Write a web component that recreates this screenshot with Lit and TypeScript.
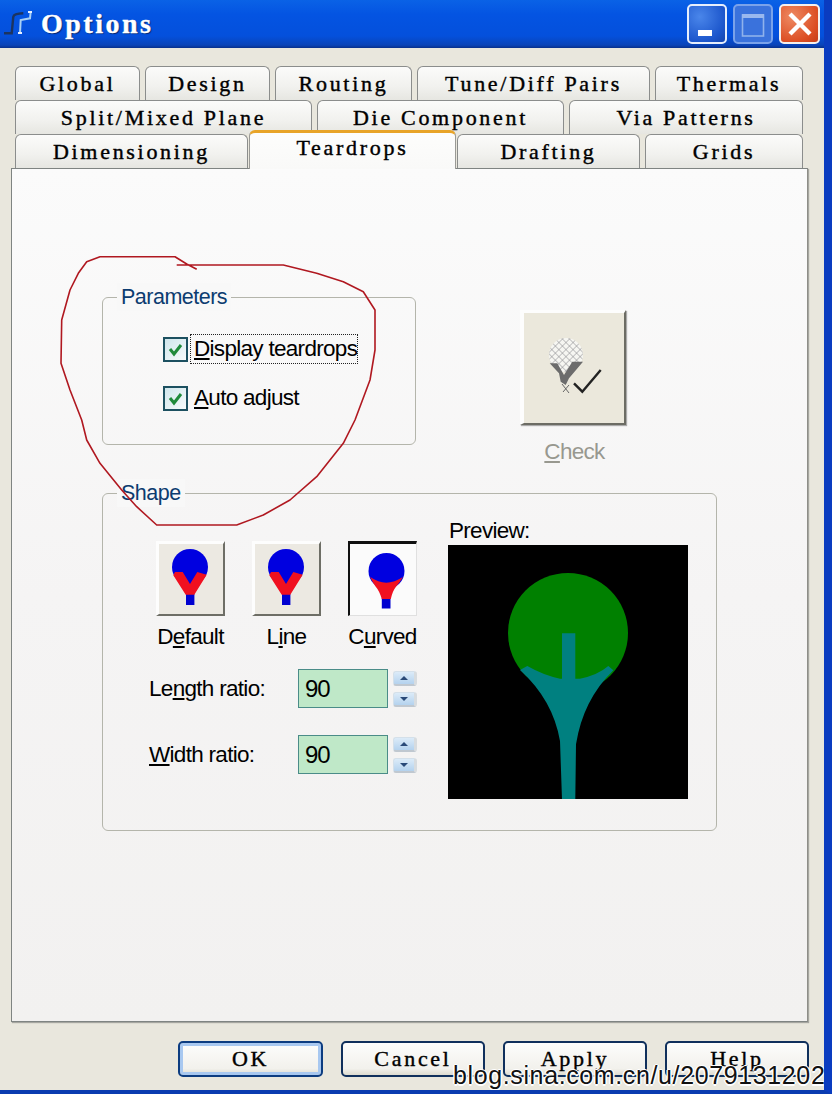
import { LitElement, html, css, svg } from "lit";
import { customElement } from "lit/decorators.js";

const shapeIcon = (kind: string) => {
  if (kind === "curved") {
    return svg`<svg class="glyph" viewBox="0 0 68 75">
      <circle cx="38" cy="30" r="18" fill="#0000e0"/>
      <rect x="33.3" y="57" width="8.7" height="10.5" fill="#0000d0"/>
      <path d="M21.7 36 Q30 41.7 37.7 41.7 Q46 41.7 54.3 36 Q51 42 48 45 Q44 50 42.3 58 H33.3 Q31 50 26.7 45 Q24 41 21.7 36Z" fill="#f01020"/>
    </svg>`;
  }
  return svg`<svg class="glyph" viewBox="0 0 69 75">
    <circle cx="34" cy="26" r="18" fill="#0000e0"/>
    <rect x="30" y="53" width="8.4" height="11" fill="#0000d0"/>
    <path d="M19 31 H26.7 L34 43 L41.3 31 L50.7 33.7 L38.3 53.7 H29.7 L17.3 34.3Z" fill="#f01020"/>
  </svg>`;
};

const circlePoints =
  "196.7,269.3 186.7,264 175,256.7 100,256.7 86.7,261.7 78.3,273.3 70,290 61.7,320 61,363.3 70,390 81.7,420 86.7,440 100,463.3 121.7,490 136.7,506.7 156.7,525 236.7,525 263.3,515 290,500 316.7,476.7 343.3,443.3 355,420 370,380 375,350 375,310 363.3,291.7 343.3,281.7 316.7,273.3 283.3,265 176.7,265";

@customElement("app-root")
export class AppRoot extends LitElement {
  static styles = css`
    :host {
      display: block;
      position: relative;
      width: 832px;
      height: 1094px;
      overflow: hidden;
      box-sizing: border-box;
      background: #e9e7dd;
      border-right: 8px solid #0a3cc0;
      border-bottom: 4px solid #0a3cb0;
      font-family: "Liberation Sans", Arial, sans-serif;
      color: #000;
    }
    .title {
      height: 48px;
      display: flex;
      align-items: center;
      margin-right: -8px;
      padding: 0 12px 0 4px;
      box-sizing: border-box;
      background: linear-gradient(180deg, #0a62e6 0%, #0454e2 30%, #0450dc 75%, #0a44b8 94%, #08308c 100%);
    }
    .title-icon { width: 30px; height: 30px; flex: none; margin-right: 7px; }
    .title-text {
      font: bold 28px "Liberation Serif", serif;
      letter-spacing: 2.5px;
      color: #fff;
      -webkit-text-stroke: 0.4px #fff;
      text-shadow: 1px 1px 1px #06246c;
      flex: 1;
    }
    .win-btns { display: flex; gap: 6px; }
    .win {
      width: 40px;
      height: 40px;
      box-sizing: border-box;
      border-radius: 5px;
      border: 2px solid #e6eefc;
      display: flex;
      align-items: center;
      justify-content: center;
      background: radial-gradient(circle at 30% 30%, #4a86ea, #1c56cc 70%, #1444ac);
    }
    .win svg { width: 36px; height: 36px; display: block; }
    .win.max { border-color: #7aa2ea; background: #3a72dc; }
    .win.close { width: 41px; border-color: #f4f0ee; background: radial-gradient(circle at 30% 30%, #ee8a62, #dc4e24 70%, #c43c18); }

    .tabs { margin: 18px 0 0 15px; width: 788px; }
    .row { display: grid; column-gap: 5px; grid-template-rows: 34px; height: 34px; }
    .r1 { grid-template-columns: 125px 125px 137px 233px 148px; }
    .r2 { grid-template-columns: 297px 247px 234px; }
    .r3 { grid-template-columns: 233px 199px 183px 158px; }
    .tab {
      box-sizing: border-box;
      border: 1px solid #8b8d8c;
      border-bottom: 0;
      border-radius: 6px 6px 0 0;
      background: linear-gradient(180deg, #fbfbfa 0%, #f1f1ee 60%, #e6e6e1 100%);
      font: 22px/30px "Liberation Serif", serif;
      padding-top: 2px;
      letter-spacing: 2.7px;
      text-align: center;
      white-space: pre;
      -webkit-text-stroke: 0.4px #000;
    }
    .tab.sel {
      position: relative;
      z-index: 2;
      margin: -4px -4px -1px;
      border: 1px solid #9a9a96;
      border-top: 3px solid #e8a428;
      border-bottom: 0;
      background: linear-gradient(180deg, #fdfdfc, #f9f9f8);
      padding-top: 0;
      line-height: 30px;
    }
    .panel {
      box-sizing: border-box;
      margin-left: 11px;
      width: 797px;
      height: 854px;
      border: 1px solid #7f8482;
      border-right-color: #8e8e88;
      box-shadow: 1px 1px 1px #a6a6a0;
      background: linear-gradient(180deg, #fbfbfb 0%, #f5f4f4 50%, #f2f1f0 100%);
      padding: 128px 0 0 90px;
    }
    .top { display: flex; align-items: flex-start; height: 148px; }
    .group {
      position: relative;
      box-sizing: border-box;
      border: 1px solid #b4b5ab;
      border-radius: 6px;
    }
    .params { width: 314px; height: 148px; padding: 38px 0 0 60px; flex: none; }
    .legend {
      position: absolute;
      left: 14px;
      top: -15px;
      padding: 0 4px;
      background: #f8f8f8;
      color: #0c3c70;
      font-size: 21.5px;
      line-height: 28px;
      letter-spacing: -0.5px;
    }
    .chk-row { display: flex; align-items: center; height: 26px; margin-bottom: 23px; }
    .box {
      box-sizing: border-box;
      width: 25px;
      height: 25px;
      flex: none;
      border: 2px solid #1c5060;
      background: linear-gradient(135deg, #d0e6ec, #f6fafa);
      margin-right: 6px;
    }
    .box svg { display: block; width: 21px; height: 21px; }
    .lbl { font-size: 22.5px; line-height: 28px; letter-spacing: -0.7px; white-space: nowrap; }
    .focus { outline: 1.5px dotted #222; padding: 0 0 0 3px; margin-left: -3px; }
    .check-col { margin: 13px 0 0 104px; display: flex; flex-direction: column; align-items: center; width: 106px; flex: none; }
    .check-btn {
      box-sizing: border-box;
      width: 106px;
      height: 115px;
      background: #ebe8dc;
      border-top: 3px solid #fdfdfd;
      border-left: 4px solid #fdfdfd;
      border-right: 2px solid #6c6c64;
      border-bottom: 2px solid #6c6c64;
      box-shadow: 1px 1px 1px #aaa;
    }
    .check-btn svg { display: block; margin: -3px 0 0 -4px; width: 106px; height: 115px; }
    .check-lbl { color: #98988f; margin: 13px 0 0 3px; }

    .shape {
      margin-top: 48px;
      width: 615px;
      height: 338px;
      padding: 23px 0 0 45px;
      display: flex;
    }
    .left { width: 300px; padding-top: 24px; box-sizing: border-box; }
    .shapes { display: flex; gap: 27px; margin-left: 8px; }
    .shape-col { display: flex; flex-direction: column; align-items: center; width: 69px; }
    .shape-btn {
      box-sizing: border-box;
      width: 69px;
      height: 75px;
      background: #ece9e2;
      border-top: 3px solid #fdfdfd;
      border-left: 3px solid #fdfdfd;
      border-right: 2px solid #6e6e66;
      border-bottom: 2px solid #6e6e66;
      position: relative;
    }
    .shape-btn.on {
      background: #fbfbfb;
      border-top: 3px solid #101010;
      border-left: 2px solid #101010;
      border-right: 1px solid #e0e0e0;
      border-bottom: 1px solid #e0e0e0;
    }
    .glyph { position: absolute; left: -3px; top: -3px; width: 69px; height: 75px; }
    .shape-btn.on .glyph { left: -2px; top: -3px; }
    .shape-col .lbl { margin-top: 7px; }
    .ratio { display: flex; align-items: center; margin-top: 27px; height: 39px; }
    .ratio.first { margin-top: 18px; }
    .ratio .lbl { width: 149px; margin-left: 1px; flex: none; }
    .input {
      box-sizing: border-box;
      width: 90px;
      height: 39px;
      border: 1px solid #4a8c88;
      background: #bfe8c8;
      font-size: 24px;
      line-height: 37px;
      padding-left: 6px;
      letter-spacing: -1px;
    }
    .spin { display: flex; flex-direction: column; gap: 6px; margin-left: 5px; }
    .spin div {
      box-sizing: border-box;
      width: 24px;
      height: 15px;
      border-radius: 3px;
      background: linear-gradient(180deg, #dcebf8, #b4d2ee);
      border: 1px solid #d4e0ea;
      border-right: 3px solid #d8dcdf;
      border-bottom: 2px solid #c0c8d0;
      display: flex;
      align-items: center;
      justify-content: center;
    }
    .spin i { display: block; width: 0; height: 0; border-left: 4px solid transparent; border-right: 4px solid transparent; }
    .spin .u i { border-bottom: 4px solid #2a4a78; }
    .spin .d i { border-top: 4px solid #2a4a78; }
    .preview { display: flex; flex-direction: column; }
    .preview .lbl { margin-left: 1px; height: 28px; }
    .preview svg { display: block; width: 240px; height: 254px; background: #000; }

    .footer { display: flex; justify-content: flex-end; gap: 18px; padding: 19px 15px 0 0; }
    .btn {
      box-sizing: border-box;
      width: 144px;
      height: 36px;
      border: 2px solid #10305c;
      border-radius: 5px;
      background: linear-gradient(180deg, #fdfdfc, #f2f1ec 80%, #dedcd0);
      font: 22px/32px "Liberation Serif", serif;
      letter-spacing: 2.7px;
      text-align: center;
      -webkit-text-stroke: 0.4px #000;
    }
    .btn.def { box-shadow: inset 0 0 0 3px #a8c8f0; border-color: #0c3c80; width: 145px; }

    .annot { position: absolute; left: 0; top: 0; width: 832px; height: 1094px; pointer-events: none; z-index: 5; }
    .mark {
      position: absolute;
      z-index: 6;
      left: 453px;
      top: 1060px;
      font-size: 25px;
      line-height: 30px;
      letter-spacing: 0.62px;
      white-space: nowrap;
      color: #111;
      text-shadow: 1.5px 0 0 #fff, -1.5px 0 0 #fff, 0 1.5px 0 #fff, 0 -1.5px 0 #fff;
    }
  `;

  private tab(t: string, sel = false) {
    return html`<div class="tab ${sel ? "sel" : ""}">${t}</div>`;
  }

  private tick() {
    return html`<svg viewBox="0 0 21 21"><path d="M5 10 L9 15 L16 6" fill="none" stroke="#1f8a3a" stroke-width="3"/></svg>`;
  }

  render() {
    return html`
      <div class="title">
        <svg class="title-icon" viewBox="0 0 30 30">
          <path d="M0 24.3 H7.7 L9.3 7.7 Q10 4.6 19.3 4.3" fill="none" stroke="#1c3460" stroke-width="2.4"/>
          <path d="M16 24.3 L16.7 11 L26 9.3 L26.7 2.7" fill="none" stroke="#a8d0f4" stroke-width="2"/>
          <path d="M14 24 H18 M24 3 H28" stroke="#e8f0ff" stroke-width="2"/>
        </svg>
        <div class="title-text">Options</div>
        <div class="win-btns">
          <div class="win"><svg viewBox="0 0 36 36"><rect x="9" y="24" width="14" height="6" fill="#fff"/></svg></div>
          <div class="win max"><svg viewBox="0 0 36 36"><rect x="7.5" y="9" width="21" height="21" fill="none" stroke="#8fb2ec" stroke-width="1.6"/><rect x="7" y="8" width="22" height="4" fill="#9ab8ee"/></svg></div>
          <div class="win close"><svg viewBox="0 0 36 36"><path d="M8 8 L28 28 M28 8 L8 28" stroke="#fff" stroke-width="4.4"/></svg></div>
        </div>
      </div>

      <div class="tabs">
        <div class="row r1">
          ${this.tab("Global")}${this.tab("Design")}${this.tab("Routing")}${this.tab("Tune/Diff Pairs")}${this.tab("Thermals")}
        </div>
        <div class="row r2">
          ${this.tab("Split/Mixed Plane")}${this.tab("Die Component")}${this.tab("Via Patterns")}
        </div>
        <div class="row r3">
          ${this.tab("Dimensioning")}${this.tab("Teardrops", true)}${this.tab("Drafting")}${this.tab("Grids")}
        </div>
      </div>

      <div class="panel">
        <div class="top">
          <div class="group params">
            <div class="legend">Parameters</div>
            <div class="chk-row"><div class="box">${this.tick()}</div><div class="lbl focus"><u>D</u>isplay teardrops</div></div>
            <div class="chk-row"><div class="box">${this.tick()}</div><div class="lbl"><u>A</u>uto adjust</div></div>
          </div>
          <div class="check-col">
            <div class="check-btn">
              <svg viewBox="0 0 106 115">
                <defs>
                  <pattern id="mesh" width="5" height="5" patternUnits="userSpaceOnUse" patternTransform="rotate(45)">
                    <rect width="5" height="5" fill="#f6f6f2"/>
                    <path d="M0 0H5M0 0V5" stroke="#8a8a8e" stroke-width="1"/>
                  </pattern>
                </defs>
                <circle cx="46" cy="45" r="17" fill="url(#mesh)"/>
                <polygon points="29.7,53.3 37.3,53.3 44,65 52.3,51.7 63,51.7 49,68.3 45.7,75 40.7,71.7 39,63.3" fill="#6c6c6c"/>
                <path d="M42 74 L49 83 M49 75 L43 82" stroke="#666" stroke-width="1" fill="none"/>
                <path d="M54 73.3 L62.3 81.7 L80.7 60" stroke="#222" stroke-width="2.4" fill="none"/>
              </svg>
            </div>
            <div class="lbl check-lbl"><u>C</u>heck</div>
          </div>
        </div>

        <div class="group shape">
          <div class="legend">Shape</div>
          <div class="left">
            <div class="shapes">
              <div class="shape-col"><div class="shape-btn">${shapeIcon("default")}</div><div class="lbl">D<u>e</u>fault</div></div>
              <div class="shape-col"><div class="shape-btn">${shapeIcon("line")}</div><div class="lbl">L<u>i</u>ne</div></div>
              <div class="shape-col"><div class="shape-btn on">${shapeIcon("curved")}</div><div class="lbl">C<u>u</u>rved</div></div>
            </div>
            <div class="ratio first">
              <div class="lbl">Le<u>n</u>gth ratio:</div>
              <div class="input">90</div>
              <div class="spin"><div class="u"><i></i></div><div class="d"><i></i></div></div>
            </div>
            <div class="ratio">
              <div class="lbl"><u>W</u>idth ratio:</div>
              <div class="input">90</div>
              <div class="spin"><div class="u"><i></i></div><div class="d"><i></i></div></div>
            </div>
          </div>
          <div class="preview">
            <div class="lbl">Preview:</div>
            <svg viewBox="0 0 240 254">
              <circle cx="120" cy="88" r="60" fill="#008000"/>
              <path d="M79.3 121 Q95 130 112 133.7 H114 V88.3 H127.3 V133.7 H132 Q150 130 160.3 121 L165.3 125.3 Q135 155 128 199.3 L127.3 254 H114 L112 196 Q105 155 72 125Z" fill="#008080"/>
            </svg>
          </div>
        </div>
      </div>

      <div class="footer">
        <div class="btn def">OK</div>
        <div class="btn">Cancel</div>
        <div class="btn">Apply</div>
        <div class="btn">Help</div>
      </div>

      <svg class="annot" viewBox="0 0 832 1094">
        <polyline points="${circlePoints}" fill="none" stroke="#b01820" stroke-width="1.6" stroke-linejoin="round"/>
      </svg>
      <div class="mark">blog.sina.com.cn/u/2079131202</div>
    `;
  }
}
